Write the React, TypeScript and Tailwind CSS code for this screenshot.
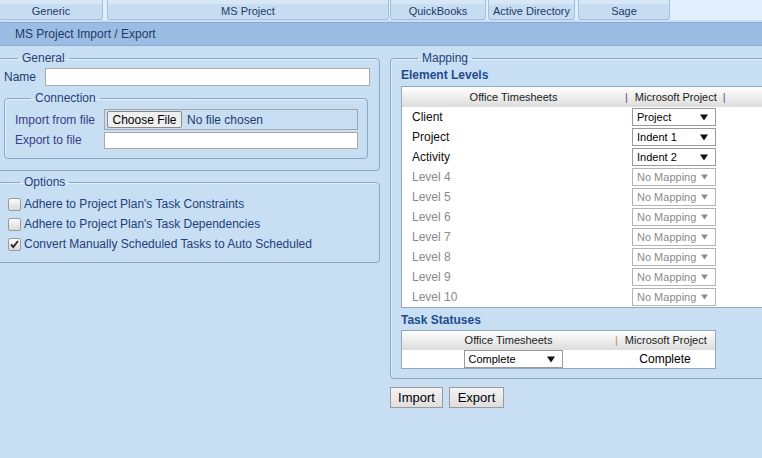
import React from "react";

function Tri({ disabled }: { disabled?: boolean }) {
  return disabled ? (
    <svg width="7" height="6" viewBox="0 0 7 6" className="shrink-0">
      <path d="M0 0.5 L7 0.5 L3.5 5.5 Z" fill="#8c8c8c" />
    </svg>
  ) : (
    <svg width="8" height="7" viewBox="0 0 8 7" className="shrink-0">
      <path d="M0 0.5 L8 0.5 L4 6.5 Z" fill="#111" />
    </svg>
  );
}

function Sel({ label, disabled, wide }: { label: string; disabled?: boolean; wide?: boolean }) {
  return (
    <div
      className={`flex items-center justify-between h-[18px] border bg-white pl-[4px] pr-[7px] text-[11px] leading-none ${
        wide ? "w-[99px]" : "w-[84px]"
      } ${disabled ? "border-[#b4b4b4] text-[#8a8a8a]" : "border-[#9a9a9a] text-black"}`}
    >
      <span>{label}</span>
      <Tri disabled={disabled} />
    </div>
  );
}

function Check({ checked }: { checked?: boolean }) {
  return (
    <span className="relative w-[13px] h-[13px] shrink-0 border border-[#9a9a9a] rounded-[2px] bg-gradient-to-b from-[#fbfbfb] to-[#dadada]">
      {checked && (
        <svg width="11" height="11" viewBox="0 0 11 11" className="absolute left-[0px] top-[0px]">
          <path d="M2 5.5 L4.3 8 L9 2" stroke="#2a2a2a" strokeWidth="1.9" fill="none" />
        </svg>
      )}
    </span>
  );
}

const tabs = [
  { t: "Generic", c: "ml-[-1px] w-[104px]" },
  { t: "MS Project", c: "ml-[4px] w-[282px]" },
  { t: "QuickBooks", c: "ml-[1px] w-[96px]" },
  { t: "Active Directory", c: "ml-[2px] w-[87px]" },
  { t: "Sage", c: "ml-[3px] w-[92px]" },
];

const levels = [
  { l: "Client", v: "Project" },
  { l: "Project", v: "Indent 1" },
  { l: "Activity", v: "Indent 2" },
  { l: "Level 4" },
  { l: "Level 5" },
  { l: "Level 6" },
  { l: "Level 7" },
  { l: "Level 8" },
  { l: "Level 9" },
  { l: "Level 10" },
];

export default function App() {
  return (
    <div className="w-[762px] h-[458px] overflow-hidden bg-[#c8dff3] font-['Liberation_Sans',Arial,sans-serif] text-[#233e78]">
      {/* tabs */}
      <div className="h-[20px] bg-[#e0effb] flex items-start">
        {tabs.map((t) => (
          <div
            key={t.t}
            className={`${t.c} h-[20px] shrink-0 rounded-b-[3px] border border-t-0 border-[#a3c0da] bg-gradient-to-b from-[#d6e8f8] from-[20%] to-[#c6dcf1] to-[25%] flex items-center justify-center text-[11px] text-[#1f3a68] pt-[3px]`}
          >
            {t.t}
          </div>
        ))}
      </div>
      {/* header */}
      <div className="mt-[2px] h-[24px] border-t border-b border-[#8aaad0] bg-[#9bbde3] flex items-center pl-[15px] text-[12px] text-[#1f3a68]">
        MS Project Import / Export
      </div>
      {/* body */}
      <div className="flex items-start pt-[5px]">
        {/* left column */}
        <div className="w-[380px] shrink-0">
          <fieldset className="ml-[-3px] w-[383px] border border-[#89a7c2] rounded-[4px] pb-[11px] shadow-[inset_1px_1px_0_#e2eefa]">
            <legend className="ml-[20px] px-[4px] text-[12px] leading-[14px]">General</legend>
            <div className="mt-[3px] flex items-center h-[18px] pl-[6px] text-[12px]">
              <span className="w-[41px] shrink-0 text-[#1b3c70]">Name</span>
              <div className="w-[325px] h-[18px] bg-white border border-[#a9a9a9]" />
            </div>
            <fieldset className="mt-[5px] ml-[6px] w-[364px] border border-[#89a7c2] rounded-[4px] pb-[9px] shadow-[inset_1px_1px_0_#e2eefa]">
              <legend className="ml-[26px] px-[4px] text-[12px] leading-[14px]">Connection</legend>
              <div className="mt-[4px] flex items-center pl-[10px] text-[12px]">
                <span className="w-[89px] shrink-0 text-[#3a3a88]">Import from file</span>
                <div className="w-[254px] h-[21px] border border-[#a6a6a6] flex items-center pl-[2px]">
                  <div className="w-[75px] h-[17px] bg-[#efefef] border border-[#8a8a8a] rounded-[2px] flex items-center justify-center text-[12px] text-black">
                    Choose File
                  </div>
                  <span className="ml-[5px] text-[12px] text-[#1f3a68]">No file chosen</span>
                </div>
              </div>
              <div className="mt-[1px] flex items-center pl-[10px] text-[12px]">
                <span className="w-[89px] shrink-0 text-[#3a3a88]">Export to file</span>
                <div className="w-[254px] h-[17px] bg-white border border-[#a9a9a9]" />
              </div>
            </fieldset>
          </fieldset>
          <fieldset className="mt-[4px] ml-[-3px] w-[383px] border border-[#89a7c2] rounded-[4px] pb-[8px] shadow-[inset_1px_1px_0_#e2eefa]">
            <legend className="ml-[22px] px-[4px] text-[12px] leading-[14px]">Options</legend>
            <div className="mt-[5px] text-[12px]">
              {[
                ["Adhere to Project Plan's Task Constraints", false],
                ["Adhere to Project Plan's Task Dependencies", false],
                ["Convert Manually Scheduled Tasks to Auto Scheduled", true],
              ].map(([t, c]) => (
                <div key={t as string} className="h-[20px] flex items-center pl-[10px]">
                  <Check checked={c as boolean} />
                  <span className="ml-[3px]">{t as string}</span>
                </div>
              ))}
            </div>
          </fieldset>
        </div>
        {/* right column */}
        <div className="ml-[10px] w-[380px] shrink-0">
          <fieldset className="w-[400px] border border-[#89a7c2] rounded-[4px] pl-[10px] pb-[9px] shadow-[inset_1px_1px_0_#e2eefa]">
            <legend className="ml-[17px] px-[4px] text-[12px] leading-[14px]">Mapping</legend>
            <div className="mt-[2px] leading-[16px] text-[12px] font-bold text-[#1f4c8c]">Element Levels</div>
            <div className="mt-[3px] w-[400px] border border-[#8fa9bf] bg-white">
              <div className="h-[20px] bg-gradient-to-b from-white to-[#dcdcdc] flex items-center text-[11px] text-[#222]">
                <span className="w-[223px] text-center">Office Timesheets</span>
                <span className="text-[#6e3f8e]">|</span>
                <span className="ml-[7px]">Microsoft Project</span>
                <span className="ml-[6px] text-[#6e3f8e]">|</span>
              </div>
              {levels.map((r, i) => (
                <div key={r.l} className="h-[20px] flex items-center text-[12px]">
                  <span className={`w-[230px] pl-[10px] ${i < 3 ? "text-[#111]" : "text-[#8a8a8a]"}`}>{r.l}</span>
                  <Sel label={r.v ?? "No Mapping"} disabled={i >= 3} />
                </div>
              ))}
            </div>
            <div className="mt-[4px] leading-[16px] text-[12px] font-bold text-[#1f4c8c]">Task Statuses</div>
            <div className="mt-[2px] w-[315px] border border-[#8fa9bf] bg-white">
              <div className="h-[19px] bg-gradient-to-b from-white to-[#dcdcdc] flex items-center text-[11px] text-[#222]">
                <span className="w-[213px] text-center">Office Timesheets</span>
                <span className="text-[#c08a3a]">|</span>
                <span className="ml-[7px]">Microsoft Project</span>
              </div>
              <div className="h-[18px] flex items-center text-[12px] text-black">
                <div className="w-[213px] flex justify-center pl-[9px]">
                  <Sel label="Complete" wide />
                </div>
                <span className="w-[100px] text-center">Complete</span>
              </div>
            </div>
          </fieldset>
          <div className="mt-[8px] flex text-[13px] text-black">
            <div className="w-[53px] h-[21px] border border-[#9a9a9a] bg-gradient-to-b from-[#f4f4f4] to-[#dedede] flex items-center justify-center">
              Import
            </div>
            <div className="ml-[6px] w-[55px] h-[21px] border border-[#9a9a9a] bg-gradient-to-b from-[#f4f4f4] to-[#dedede] flex items-center justify-center">
              Export
            </div>
          </div>
        </div>
      </div>
    </div>
  );
}
